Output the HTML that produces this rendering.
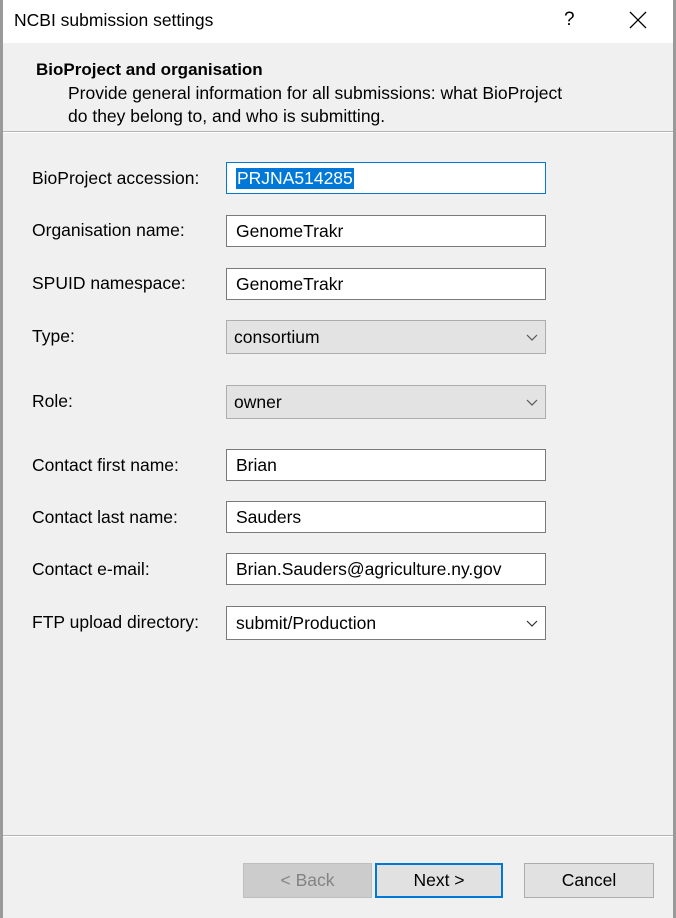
<!DOCTYPE html>
<html><head><style>
*{margin:0;padding:0;box-sizing:border-box}
body{width:676px;height:918px;background:#f0f0f0;font-family:"Liberation Sans",sans-serif;font-size:17.5px;color:#000;position:relative;overflow:hidden}
.abs{position:absolute}
.lbl{position:absolute;left:32px;line-height:20px}
.box{position:absolute;left:226px;width:320px;background:#fff;border:1px solid #7a7a7a;padding-left:9px;display:flex;align-items:center}
.sel{background:#e3e3e3;border-color:#adadad;padding-left:7px}
.arr{position:absolute;right:7px;top:50%;margin-top:-5px}
.btn{position:absolute;top:863px;height:35px;background:#e1e1e1;border:1px solid #adadad;text-align:center;line-height:33px;font-size:17.5px}
</style></head><body>
<div class="abs" style="left:0;top:0;width:3px;height:918px;background:#9a9a9a"></div>
<div class="abs" style="right:0;top:0;width:3px;height:918px;background:#9a9a9a"></div>
<div class="abs" style="left:3px;top:0;width:670px;height:43px;background:#fff"></div>
<div class="abs" style="left:14px;top:10px;font-size:17.5px">NCBI submission settings</div>
<div class="abs" style="left:564px;top:9px;font-size:19px">?</div>
<svg class="abs" style="left:629px;top:11px" width="18" height="18"><path d="M1 1L17 17M17 1L1 17" stroke="#000" stroke-width="1.3"/></svg>
<div class="abs" style="left:36px;top:60px;font-weight:bold;font-size:17px">BioProject and organisation</div>
<div class="abs" style="left:68px;top:82px;line-height:23px;font-size:17.5px">Provide general information for all submissions: what BioProject<br>do they belong to, and who is submitting.</div>
<div class="abs" style="left:3px;top:131px;width:670px;height:2px;background:#b5b5b5;border-bottom:1px solid #fff"></div>

<div class="lbl" style="top:168px">BioProject accession:</div>
<div class="box" style="top:162px;height:32px;border-color:#0078d7"><span style="background:#0078d7;color:#fff;padding:0 1px">PRJNA514285</span></div>
<div class="lbl" style="top:220px">Organisation name:</div>
<div class="box" style="top:215px;height:32px">GenomeTrakr</div>
<div class="lbl" style="top:273px">SPUID namespace:</div>
<div class="box" style="top:268px;height:32px">GenomeTrakr</div>
<div class="lbl" style="top:326px">Type:</div>
<div class="box sel" style="top:320px;height:34px">consortium<svg class="arr" width="12" height="10"><path d="M1 3L6 8L11 3" fill="none" stroke="#555" stroke-width="1.2"/></svg></div>
<div class="lbl" style="top:391px">Role:</div>
<div class="box sel" style="top:385px;height:34px">owner<svg class="arr" width="12" height="10"><path d="M1 3L6 8L11 3" fill="none" stroke="#555" stroke-width="1.2"/></svg></div>
<div class="lbl" style="top:455px">Contact first name:</div>
<div class="box" style="top:449px;height:32px">Brian</div>
<div class="lbl" style="top:507px">Contact last name:</div>
<div class="box" style="top:501px;height:32px">Sauders</div>
<div class="lbl" style="top:559px">Contact e-mail:</div>
<div class="box" style="top:553px;height:32px">Brian.Sauders@agriculture.ny.gov</div>
<div class="lbl" style="top:612px">FTP upload directory:</div>
<div class="box" style="top:606px;height:34px">submit/Production<svg class="arr" width="12" height="10"><path d="M1 3L6 8L11 3" fill="none" stroke="#333" stroke-width="1.2"/></svg></div>

<div class="abs" style="left:3px;top:835px;width:670px;height:2px;background:#b5b5b5;border-bottom:1px solid #fff"></div>
<div class="btn" style="left:243px;width:129px;background:#cccccc;border-color:#bfbfbf;color:#838383">&lt; Back</div>
<div class="btn" style="left:375px;width:128px;border:2px solid #0078d7;line-height:31px">Next &gt;</div>
<div class="btn" style="left:524px;width:130px">Cancel</div>
</body></html>
